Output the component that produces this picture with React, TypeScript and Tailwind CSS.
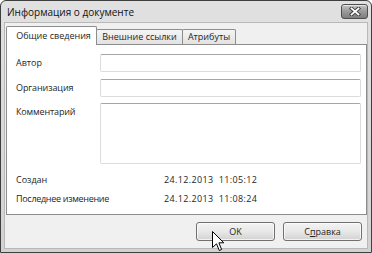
import React from "react";

export default function App() {
  return (
    <div className="w-[372px] h-[253px] overflow-hidden relative font-['Open_Sans','Noto_Sans',sans-serif] text-[#262626]">
      <div className="w-full h-full flex flex-col border border-[#3f3f3f] rounded-t-[6px] bg-gradient-to-b from-[#e1e1e1] to-[#d2d2d2]">
        <div className="h-[21px] shrink-0 flex items-start justify-between pl-[6px] pr-[3px]">
          <span className="text-[10px] leading-[22px] text-[#111]">Информация о документе</span>
          <div className="mt-[3px] w-[27px] h-[15px] rounded-[3px] border border-[#4e4e4e] bg-gradient-to-b from-[#c4c4c4] via-[#9a9a9a] to-[#7e7e7e] flex items-center justify-center shadow-[inset_0_1px_0_rgba(255,255,255,0.6)]">
            <svg width="12" height="9" viewBox="0 0 12 9">
              <path d="M2.5 1.5 L9.5 7.5 M9.5 1.5 L2.5 7.5" stroke="#3a3a3a" strokeWidth="3.6" strokeLinecap="square" fill="none" />
              <path d="M2.5 1.5 L9.5 7.5 M9.5 1.5 L2.5 7.5" stroke="#ffffff" strokeWidth="1.8" strokeLinecap="square" fill="none" />
            </svg>
          </div>
        </div>
        <div className="flex-1 mx-[3px] mb-[3px] border border-[#b8b8b8] bg-[#f0f0f0] pl-[1px] pt-[3px] flex flex-col">
          <div className="flex items-end h-[18px] text-[9px] leading-[12px]">
            <div className="relative z-10 w-[91px] h-[19px] -mb-px bg-white border border-b-0 border-[#8d8d8d] rounded-t-[2px] flex items-center justify-center pl-[4px]">
              Общие сведения
            </div>
            <div className="-ml-px w-[87px] h-[15px] bg-gradient-to-b from-[#f5f5f5] to-[#e2e2e2] border border-b-0 border-[#8d8d8d] rounded-t-[2px] flex items-center justify-center">
              Внешние ссылки
            </div>
            <div className="-ml-px w-[54px] h-[15px] bg-gradient-to-b from-[#f5f5f5] to-[#e2e2e2] border border-b-0 border-[#8d8d8d] rounded-t-[2px] flex items-center justify-center">
              Атрибуты
            </div>
          </div>
          <div className="h-[171px] border border-[#8d8d8d] bg-white pt-[9px] pl-[9px] text-[9px] leading-[12px]">
            <div className="flex h-[18px]">
              <div className="w-[84px] flex items-center">Автор</div>
              <div className="w-[261px] border border-[#dcdcdc] border-t-[#a6a6a6] rounded-[2px] bg-white" />
            </div>
            <div className="flex h-[18px] mt-[7px]">
              <div className="w-[84px] flex items-center tracking-[-0.1px]">Организация</div>
              <div className="w-[261px] border border-[#dcdcdc] border-t-[#a6a6a6] rounded-[2px] bg-white" />
            </div>
            <div className="flex h-[61px] mt-[6px]">
              <div className="w-[84px] pt-[3px] tracking-[-0.15px]">Комментарий</div>
              <div className="w-[261px] border border-[#dcdcdc] border-t-[#a6a6a6] rounded-[2px] bg-white" />
            </div>
            <div className="flex h-[19px] mt-[6px] items-center">
              <div className="w-[148px]">Создан</div>
              <div className="whitespace-pre tracking-[0.35px]">24.12.2013  11:05:12</div>
            </div>
            <div className="flex h-[19px] items-center">
              <div className="w-[148px] tracking-[-0.3px]">Последнее изменение</div>
              <div className="whitespace-pre tracking-[0.35px]">24.12.2013  11:08:24</div>
            </div>
          </div>
          <div className="flex justify-end gap-[8px] pr-[5px] mt-[7px] text-[9px] leading-[12px]">
            <div className="w-[79px] h-[19px] rounded-[3px] border border-[#707070] bg-gradient-to-b from-[#f3f3f3] via-[#e8e8e8] to-[#d2d2d2] shadow-[inset_0_0_0_1px_rgba(255,255,255,0.7)] flex items-center justify-center">
              OK
            </div>
            <div className="w-[79px] h-[19px] rounded-[3px] border border-[#707070] bg-gradient-to-b from-[#f3f3f3] via-[#e8e8e8] to-[#d2d2d2] shadow-[inset_0_0_0_1px_rgba(255,255,255,0.7)] flex items-center justify-center">
              <span>
                С<span className="underline">п</span>равка
              </span>
            </div>
          </div>
        </div>
      </div>
      <svg className="absolute left-[212px] top-[231px]" width="13" height="21" viewBox="0 0 13 21">
        <path d="M0.5 0.5 L0.5 16.5 L4.5 12.8 L7.3 19.5 L9.6 18.5 L6.9 11.8 L11.8 11.8 Z" fill="#ffffff" stroke="#000000" strokeWidth="1" strokeLinejoin="miter" />
      </svg>
    </div>
  );
}
